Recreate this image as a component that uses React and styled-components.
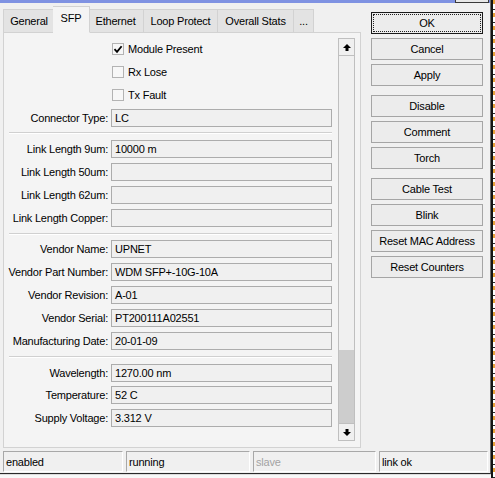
import React from "react";
import styled, { createGlobalStyle } from "styled-components";

const GlobalStyle = createGlobalStyle`
  html, body {
    margin: 0;
    padding: 0;
    background: #ffffff;
  }
  body {
    font-family: "Liberation Sans", Arial, sans-serif;
    font-size: 11px;
    letter-spacing: -0.2px;
    color: #000;
  }
`;

const Screen = styled.div`
  width: 495px;
  height: 478px;
  overflow: hidden;
  display: grid;
  grid-template-columns: 491px 4px;
  grid-template-rows: 474px 4px;
`;

const Window = styled.div`
  background: #f0f0f0;
  border-right: 1px solid #6d6d6d;
  border-bottom: 1px solid #2a2a2a;
  display: flex;
  flex-direction: column;
  box-sizing: border-box;
`;

const TitleEdge = styled.div`
  height: 3px;
  background: #7f92e2;
  display: flex;
  justify-content: flex-end;
  padding-right: 1px;
`;

const TitleButtons = styled.div`
  width: 32px;
  height: 2px;
  border: 1px solid #3a3a3a;
  border-top: none;
  background: #e8e8e8;
`;

const Body = styled.div`
  flex: 1;
  display: flex;
  padding: 3px 0 0 3px;
  min-height: 0;
`;

const LeftCol = styled.div`
  width: 358px;
  display: flex;
  flex-direction: column;
`;

const TabRow = styled.div`
  display: flex;
  align-items: flex-end;
  height: 26px;
  position: relative;
  z-index: 1;
`;

const Tab = styled.div`
  height: ${(p) => (p.$active ? "27px" : "23px")};
  width: ${(p) => p.$w}px;
  margin: 0 ${(p) => (p.$active ? "-2px" : "0")};
  box-sizing: border-box;
  display: flex;
  align-items: center;
  justify-content: center;
  padding-bottom: ${(p) => (p.$active ? "4px" : "1px")};
  background: ${(p) => (p.$active ? "#f4f4f4" : "#e3e3e3")};
  border: 1px solid #d2d2d2;
  border-bottom: ${(p) => (p.$active ? "1px solid #f4f4f4" : "none")};
  margin-bottom: ${(p) => (p.$active ? "-1px" : "0")};
  position: relative;
  z-index: ${(p) => (p.$active ? 2 : 1)};
  white-space: nowrap;
  & + & {
    border-left: ${(p) => (p.$active ? "1px solid #d2d2d2" : "none")};
  }
`;

const Panel = styled.div`
  height: 417px;
  box-sizing: border-box;
  border: 1px solid #d2d2d2;
  background: #f4f4f4;
  display: flex;
`;

const Content = styled.div`
  width: 328px;
  display: flex;
  flex-direction: column;
  gap: 4.85px;
  padding-top: 7px;
`;

const Row = styled.div`
  display: grid;
  grid-template-columns: 104px 221px;
  column-gap: 3px;
  height: 18px;
  flex: none;
  align-items: center;
`;

const Label = styled.div`
  text-align: right;
  white-space: nowrap;
`;

const Field = styled.div`
  height: 18px;
  box-sizing: border-box;
  border: 1px solid #acacac;
  background: #f0f0f0;
  padding-left: 3px;
  display: flex;
  align-items: center;
  white-space: nowrap;
`;

const Check = styled.div`
  grid-column: 2;
  display: flex;
  align-items: center;
  gap: 4px;
  padding-left: 1px;
`;

const Box = styled.div`
  width: 12px;
  height: 12px;
  box-sizing: border-box;
  border: 1px solid #b3b3b3;
  background: #f7f7f7;
  display: flex;
  align-items: center;
  justify-content: center;
`;

const Separator = styled.div`
  height: 1px;
  flex: none;
  margin: 1px 0 1px 5px;
  background: #d0d0d0;
  border-bottom: 1px solid #ffffff;
  box-sizing: content-box;
`;

const Scroll = styled.div`
  width: 17px;
  margin: 5px 0 6px 6px;
  box-sizing: border-box;
  border: 1px solid #bfbfbf;
  background: #f0f0f0;
  display: flex;
  flex-direction: column;
`;

const ScrollButton = styled.div`
  height: 16px;
  display: flex;
  align-items: center;
  justify-content: center;
  border-${(p) => (p.$down ? "top" : "bottom")}: 1px solid #bfbfbf;
  background: #f0f0f0;
`;

const Track = styled.div`
  flex: 1;
  display: flex;
  flex-direction: column;
  justify-content: flex-end;
`;

const Thumb = styled.div`
  height: 73px;
  background: #cdcdcd;
`;

const Buttons = styled.div`
  width: 112px;
  margin-left: 10px;
  padding-top: 6px;
  display: flex;
  flex-direction: column;
`;

const Group = styled.div`
  display: flex;
  flex-direction: column;
  gap: 4px;
  & + & {
    margin-top: 9px;
  }
`;

const Button = styled.div`
  height: 22px;
  box-sizing: border-box;
  border: 1px solid ${(p) => (p.$default ? "#1a1a1a" : "#a5a5a5")};
  background: #ececec;
  display: flex;
  align-items: center;
  justify-content: center;
  position: relative;
  white-space: nowrap;
  ${(p) =>
    p.$default &&
    `&::after {
      content: "";
      position: absolute;
      inset: 1px;
      border: 1px dotted #222;
    }`}
`;

const StatusBar = styled.div`
  height: 21px;
  margin: 3px 2px 1px 3px;
  display: grid;
  grid-template-columns: 120px 124px 123px 1fr;
  column-gap: 3px;
`;

const Cell = styled.div`
  border-top: 1px solid #a8a8a8;
  border-left: 1px solid #a8a8a8;
  border-bottom: 1px solid #ffffff;
  border-right: 1px solid #ffffff;
  padding-left: 2px;
  display: flex;
  align-items: center;
  color: ${(p) => (p.$muted ? "#a3a3a3" : "#000")};
`;

const RightStrip = styled.div`
  grid-row: 1 / span 2;
  grid-column: 2;
  border-left: 2px solid #141414;
  background: repeating-linear-gradient(
    to bottom,
    #e8a23c 0px,
    #e8a23c 4px,
    #ffffff 4px,
    #ffffff 9px,
    #2a2a2a 9px,
    #2a2a2a 10px,
    #ffffff 10px,
    #ffffff 13px
  );
`;

const BottomStrip = styled.div`
  background: #f8f8f8;
  border-top: 1px solid #dcdcdc;
`;

const Arrow = ({ down }) => (
  <svg width="8" height="7" viewBox="0 0 8 7">
    <polygon
      points="4,0 8,4 5.5,4 5.5,7 2.5,7 2.5,4 0,4"
      fill="#000"
      transform={down ? "rotate(180 4 3.5)" : undefined}
    />
  </svg>
);

const Tick = () => (
  <svg width="10" height="10" viewBox="0 0 10 10">
    <path d="M1.5 5.2 L4 7.8 L8.6 2.2" fill="none" stroke="#000" strokeWidth="1.8" />
  </svg>
);

const tabs = [
  { label: "General", w: 52 },
  { label: "SFP", w: 37, active: true },
  { label: "Ethernet", w: 56 },
  { label: "Loop Protect", w: 74 },
  { label: "Overall Stats", w: 76 },
  { label: "...", w: 20 },
];

const checks = [
  { label: "Module Present", on: true },
  { label: "Rx Lose", on: false },
  { label: "Tx Fault", on: false },
];

const groups = [
  [
    ["Connector Type:", "LC"],
  ],
  [
    ["Link Length 9um:", "10000 m"],
    ["Link Length 50um:", ""],
    ["Link Length 62um:", ""],
    ["Link Length Copper:", ""],
  ],
  [
    ["Vendor Name:", "UPNET"],
    ["Vendor Part Number:", "WDM SFP+-10G-10A"],
    ["Vendor Revision:", "A-01"],
    ["Vendor Serial:", "PT200111A02551"],
    ["Manufacturing Date:", "20-01-09"],
  ],
  [
    ["Wavelength:", "1270.00 nm"],
    ["Temperature:", "52 C"],
    ["Supply Voltage:", "3.312 V"],
  ],
];

const buttonGroups = [
  ["OK", "Cancel", "Apply"],
  ["Disable", "Comment", "Torch"],
  ["Cable Test", "Blink", "Reset MAC Address", "Reset Counters"],
];

const status = [
  { text: "enabled" },
  { text: "running" },
  { text: "slave", muted: true },
  { text: "link ok" },
];

export default function App() {
  return (
    <>
      <GlobalStyle />
      <Screen>
        <Window>
          <TitleEdge>
            <TitleButtons />
          </TitleEdge>
          <Body>
            <LeftCol>
              <TabRow>
                {tabs.map((t) => (
                  <Tab key={t.label} $active={t.active} $w={t.w}>
                    {t.label}
                  </Tab>
                ))}
              </TabRow>
              <Panel>
                <Content>
                  {checks.map((c) => (
                    <Row key={c.label}>
                      <Check>
                        <Box>{c.on && <Tick />}</Box>
                        {c.label}
                      </Check>
                    </Row>
                  ))}
                  {groups.map((g, i) => (
                    <React.Fragment key={i}>
                      {i > 0 && <Separator />}
                      {g.map(([label, value]) => (
                        <Row key={label}>
                          <Label>{label}</Label>
                          <Field>{value}</Field>
                        </Row>
                      ))}
                    </React.Fragment>
                  ))}
                </Content>
                <Scroll>
                  <ScrollButton>
                    <Arrow />
                  </ScrollButton>
                  <Track>
                    <Thumb />
                  </Track>
                  <ScrollButton $down>
                    <Arrow down />
                  </ScrollButton>
                </Scroll>
              </Panel>
            </LeftCol>
            <Buttons>
              {buttonGroups.map((g, i) => (
                <Group key={i}>
                  {g.map((b) => (
                    <Button key={b} $default={b === "OK"}>
                      {b}
                    </Button>
                  ))}
                </Group>
              ))}
            </Buttons>
          </Body>
          <StatusBar>
            {status.map((s) => (
              <Cell key={s.text} $muted={s.muted}>
                {s.text}
              </Cell>
            ))}
          </StatusBar>
        </Window>
        <RightStrip />
        <BottomStrip />
      </Screen>
    </>
  );
}
